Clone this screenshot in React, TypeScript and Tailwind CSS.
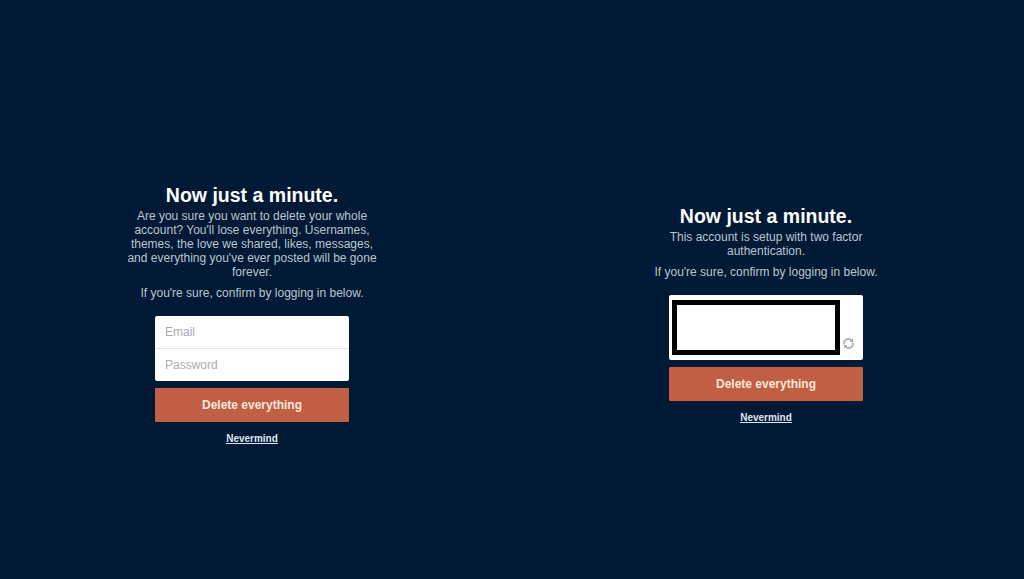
const body = 'text-[12px] leading-[14px] text-[#bcc5d1]'

function Intro({ children }: { children: React.ReactNode }) {
  return (
    <div className="text-center">
      <h1 className="text-[19.5px] leading-[24px] font-bold text-white">Now just a minute.</h1>
      <p className={`${body} mt-[2px]`}>{children}</p>
      <p className={`${body} mt-[7px]`}>If you're sure, confirm by logging in below.</p>
    </div>
  )
}

function Actions() {
  return (
    <>
      <button className="mt-[7px] block h-[34px] w-full rounded-[1px] bg-[#c15f44] text-[12px] font-bold text-[#f8e6dc]">
        Delete everything
      </button>
      <div className="mt-[8px] text-center leading-[14px]">
        <a href="#" className="text-[10px] font-bold text-[#dce6f2] underline">Nevermind</a>
      </div>
    </>
  )
}

function RefreshIcon() {
  return (
    <svg width="11" height="11" viewBox="0 0 11 11" fill="none" stroke="#a8acac" strokeWidth="1.5" className="block">
      <path d="M1.3 6.5A4.2 4.2 0 0 1 8.6 2.6" />
      <path d="M9.7 4.5A4.2 4.2 0 0 1 2.4 8.4" />
      <path d="M9.3 1v2.3H7M1.7 10V7.7H4" />
    </svg>
  )
}

export default function App() {
  return (
    <div className="grid h-screen grid-cols-[504px_1fr] gap-[4px] bg-[#001935] pt-[49px] font-['Liberation_Sans',Arial,sans-serif]">
      <div className="flex items-center justify-center">
        <div className="w-[252px]">
          <Intro>
            Are you sure you want to delete your whole account? You'll lose everything. Usernames, themes, the love we
            shared, likes, messages, and everything you've ever posted will be gone forever.
          </Intro>
          <div className="mx-auto mt-[16px] w-[194px]">
            <div className="overflow-hidden rounded-[2px] bg-white text-[12px] text-[#a9adb1]">
              <div className="flex h-[33px] items-center border-b border-[#e4e6e8] px-[10px]">Email</div>
              <div className="flex h-[32px] items-center px-[10px]">Password</div>
            </div>
            <Actions />
          </div>
        </div>
      </div>
      <div className="flex items-center justify-center">
        <div className="w-[230px]">
          <Intro>This account is setup with two factor authentication.</Intro>
          <div className="mx-auto mt-[16px] w-[194px]">
            <div className="flex h-[65px] items-end rounded-[2px] bg-white pb-[5px] pl-[3px]">
              <div className="h-[55px] w-[168px] border-[5px] border-black bg-white" />
              <div className="mb-[6px] ml-[3px]">
                <RefreshIcon />
              </div>
            </div>
            <Actions />
          </div>
        </div>
      </div>
    </div>
  )
}
